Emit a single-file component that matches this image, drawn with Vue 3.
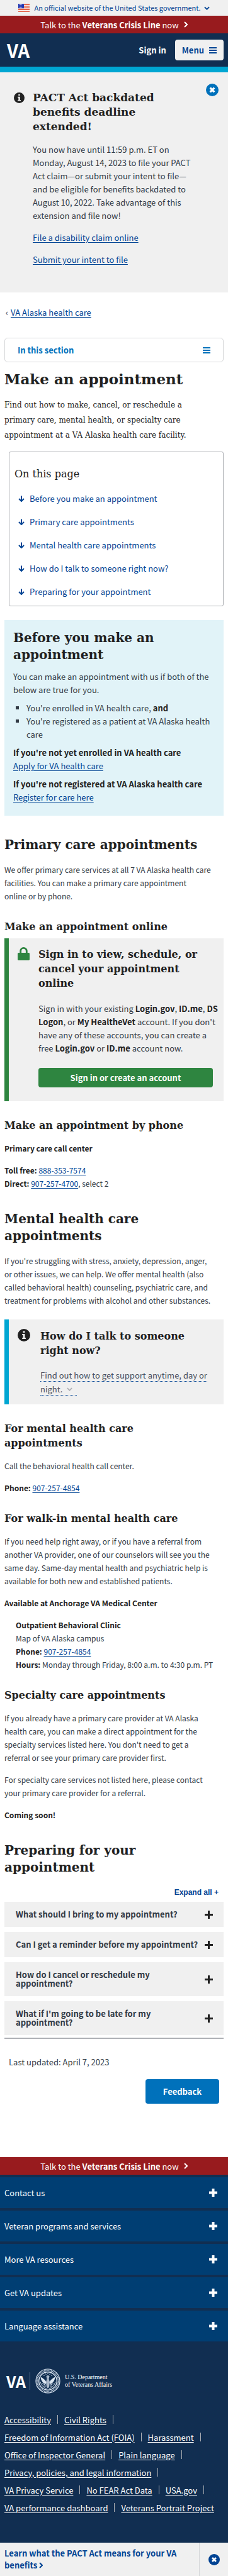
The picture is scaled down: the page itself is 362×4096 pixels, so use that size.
<script setup>
import { ref } from 'vue'

const sections = [
  'Before you make an appointment',
  'Primary care appointments',
  'Mental health care appointments',
  'How do I talk to someone right now?',
  'Preparing for your appointment',
]

const questions = [
  'What should I bring to my appointment?',
  'Can I get a reminder before my appointment?',
  'How do I cancel or reschedule my appointment?',
  "What if I'm going to be late for my appointment?",
]

const footerPanels = [
  'Contact us',
  'Veteran programs and services',
  'More VA resources',
  'Get VA updates',
  'Language assistance',
]

const footerRows = [
  ['Accessibility', 'Civil Rights'],
  ['Freedom of Information Act (FOIA)', 'Harassment'],
  ['Office of Inspector General', 'Plain language'],
  ['Privacy, policies, and legal information'],
  ['VA Privacy Service', 'No FEAR Act Data', 'USA.gov'],
  ['VA performance dashboard', 'Veterans Portrait Project'],
]

const open = ref(null)
</script>

<template>
  <div class="page">
    <header>
      <div class="gov">
        <svg class="flag" viewBox="0 0 18 13" aria-hidden="true">
          <rect width="18" height="13" fill="#fff" />
          <path d="M0 .9h18M0 3.7h18M0 6.5h18M0 9.3h18M0 12.1h18" stroke="#db3e1f" stroke-width="1.5" />
          <rect width="9" height="7.2" fill="#1e33b1" />
          <path d="M1 1.5h7M1 3.6h7M1 5.7h7" stroke="#fff" stroke-width=".8" stroke-dasharray="1 1" />
        </svg>
        <button type="button" class="gov-text">
          An official website of the United States government.
          <svg class="chev" viewBox="0 0 10 6" aria-hidden="true"><path d="M1 1l4 4 4-4" /></svg>
        </button>
      </div>
      <a class="crisis" href="#crisis">
        <span>Talk to the <strong>Veterans Crisis Line</strong> now</span>
        <svg viewBox="0 0 6 10" aria-hidden="true"><path d="M1 1l4 4-4 4" /></svg>
      </a>
      <div class="bar">
        <a href="#home" class="va">VA</a>
        <button type="button" class="signin">Sign in</button>
        <button type="button" class="menu">
          Menu
          <svg viewBox="0 0 12 10" aria-hidden="true"><path d="M0 1h12M0 5h12M0 9h12" /></svg>
        </button>
      </div>
    </header>

    <section class="promo">
      <svg class="info" viewBox="0 0 20 20" aria-hidden="true">
        <circle cx="10" cy="10" r="10" fill="#212121" />
        <path d="M8.5 3.4h3v2.6h-3zM7.2 8h4.3v6h1.4v2H7.2v-2h1.4v-4H7.2z" fill="#f0f0f0" />
      </svg>
      <div class="promo-body">
        <h2>PACT Act backdated benefits deadline extended!</h2>
        <p>You now have until 11:59 p.m. ET on Monday, August 14, 2023 to file your PACT Act claim—or submit your intent to file—and be eligible for benefits backdated to August 10, 2022. Take advantage of this extension and file now!</p>
        <p><a href="#claim">File a disability claim online</a></p>
        <p><a href="#intent">Submit your intent to file</a></p>
      </div>
      <button type="button" class="close" aria-label="Close announcement">
        <svg viewBox="0 0 20 20" aria-hidden="true">
          <circle cx="10" cy="10" r="10" fill="#0071bb" />
          <path d="M6.7 6.7l6.6 6.6M13.3 6.7l-6.6 6.6" stroke="#fff" stroke-width="3.2" />
        </svg>
      </button>
    </section>

    <main>
      <nav class="crumb" aria-label="Breadcrumb"><span>‹</span><a href="#alaska">VA Alaska health care</a></nav>
      <button type="button" class="in-section">
        In this section
        <svg viewBox="0 0 12 10" aria-hidden="true"><path d="M0 1h12M0 5h12M0 9h12" /></svg>
      </button>
      <h1>Make an appointment</h1>
      <p class="intro">Find out how to make, cancel, or reschedule a primary care, mental health, or specialty care appointment at a VA Alaska health care facility.</p>

      <nav class="toc" aria-labelledby="toc-title">
        <h2 id="toc-title">On this page</h2>
        <ul>
          <li v-for="s in sections" :key="s">
            <a href="#section">
              <svg viewBox="0 0 10 10" aria-hidden="true"><path d="M5 .5v8.2M1 5l4 4 4-4" /></svg>
              {{ s }}
            </a>
          </li>
        </ul>
      </nav>

      <section class="feature">
        <h2>Before you make an appointment</h2>
        <p>You can make an appointment with us if both of the below are true for you.</p>
        <ul>
          <li>You're enrolled in VA health care, <strong>and</strong></li>
          <li>You're registered as a patient at VA Alaska health care</li>
        </ul>
        <p><strong>If you're not yet enrolled in VA health care</strong><br><a href="#apply">Apply for VA health care</a></p>
        <p><strong>If you're not registered at VA Alaska health care</strong><br><a href="#register">Register for care here</a></p>
      </section>

      <h2>Primary care appointments</h2>
      <p>We offer primary care services at all 7 VA Alaska health care facilities. You can make a primary care appointment<br>online or by phone.</p>

      <h3>Make an appointment online</h3>
      <section class="alert green">
        <svg class="lock" viewBox="0 0 19 21" aria-hidden="true">
          <path d="M4.7 10V6.2a4.8 4.8 0 0 1 9.6 0V10" fill="none" stroke="#2e8540" stroke-width="2.8" />
          <rect y="9" width="19" height="12" rx="1.4" fill="#2e8540" />
        </svg>
        <div>
          <h3>Sign in to view, schedule, or cancel your appointment online</h3>
          <p>Sign in with your existing <strong>Login.gov</strong>, <strong>ID.me</strong>, <strong>DS Logon</strong>, or <strong>My HealtheVet</strong> account. If you don't have any of these accounts, you can create a free <strong>Login.gov</strong> or <strong>ID.me</strong> account now.</p>
          <button type="button">Sign in or create an account</button>
        </div>
      </section>

      <h3>Make an appointment by phone</h3>
      <p><strong>Primary care call center</strong></p>
      <p><strong>Toll free:</strong> <a href="#tel">888-353-7574</a><br><strong>Direct:</strong> <a href="#tel">907-257-4700</a>, select 2</p>

      <h2>Mental health care appointments</h2>
      <p>If you're struggling with stress, anxiety, depression, anger, or other issues, we can help. We offer mental health (also called behavioral health) counseling, psychiatric care, and treatment for problems with alcohol and other substances.</p>

      <section class="alert blue">
        <svg class="info" viewBox="0 0 20 20" aria-hidden="true">
          <circle cx="10" cy="10" r="10" fill="#212121" />
          <path d="M8.5 3.4h3v2.6h-3zM7.2 8h4.3v6h1.4v2H7.2v-2h1.4v-4H7.2z" fill="#f0f0f0" />
        </svg>
        <div>
          <h3>How do I talk to someone right now?</h3>
          <details>
            <summary>
              <span>Find out how to get support anytime, day or night. <svg viewBox="0 0 10 6" aria-hidden="true"><path d="M1 1l4 4 4-4" /></svg></span>
            </summary>
          </details>
        </div>
      </section>

      <h3 class="narrow">For mental health care appointments</h3>
      <p>Call the behavioral health call center.</p>
      <p><strong>Phone:</strong> <a href="#tel">907-257-4854</a></p>

      <h3>For walk-in mental health care</h3>
      <p>If you need help right away, or if you have a referral from another VA provider, one of our counselors will see you the same day. Same-day mental health and psychiatric help is available for both new and established patients.</p>
      <p><strong>Available at Anchorage VA Medical Center</strong></p>
      <p class="clinic"><strong>Outpatient Behavioral Clinic</strong><br>Map of VA Alaska campus<br><strong>Phone:</strong> <a href="#tel">907-257-4854</a><br><strong>Hours:</strong> Monday through Friday, 8:00 a.m. to 4:30 p.m. PT</p>

      <h3>Specialty care appointments</h3>
      <p>If you already have a primary care provider at VA Alaska health care, you can make a direct appointment for the specialty services listed here. You don't need to get a referral or see your primary care provider first.</p>
      <p>For specialty care services not listed here, please contact your primary care provider for a referral.</p>
      <p><strong>Coming soon!</strong></p>

      <h2 class="narrow">Preparing for your appointment</h2>
      <button type="button" class="expand">Expand all +</button>
      <div class="accordion">
        <button v-for="(q, i) in questions" :key="q" type="button" :aria-expanded="open === i" @click="open = open === i ? null : i">
          <span>{{ q }}</span>
          <svg viewBox="0 0 13 13" aria-hidden="true"><path d="M0 6.5h13M6.5 0v13" /></svg>
        </button>
      </div>
      <p class="updated">Last updated: April 7, 2023</p>
      <button type="button" class="feedback">Feedback</button>
    </main>

    <footer>
      <a class="crisis" href="#crisis">
        <span>Talk to the <strong>Veterans Crisis Line</strong> now</span>
        <svg viewBox="0 0 6 10" aria-hidden="true"><path d="M1 1l4 4-4 4" /></svg>
      </a>
      <div class="panels">
        <button v-for="p in footerPanels" :key="p" type="button">
          {{ p }}
          <svg viewBox="0 0 13 13" aria-hidden="true"><path d="M0 6.5h13M6.5 0v13" /></svg>
        </button>
      </div>
      <div class="legal">
        <div class="brand">
          <span class="va small">VA</span>
          <svg class="seal" viewBox="0 0 40 40" aria-hidden="true">
            <g fill="none" stroke="#dce6f2">
              <circle cx="20" cy="20" r="19" stroke-width="1.2" />
              <circle cx="20" cy="20" r="16.8" stroke-width="2.2" stroke-dasharray="1.3 .9" opacity=".8" />
              <circle cx="20" cy="20" r="14.3" stroke-width="1.4" />
            </g>
            <g fill="#dce6f2">
              <path d="M8.5 13.5c3 1.5 6.5 3.5 9 8l-1 3.5c-5-2-7.5-6-8-11.5z" />
              <path d="M31.5 13.5c-3 1.5-6.5 3.5-9 8l1 3.5c5-2 7.5-6 8-11.5z" />
              <path d="M17.5 12.5c1-2 4-2 5 0l-1 4 1.5 5-1 8-2 2.5-2-2.5-1-8 1.5-5z" opacity=".75" />
            </g>
            <g fill="none" stroke="#dce6f2" stroke-width=".9">
              <path d="M8 21c1.5 6 5 9.5 10 11M32 21c-1.5 6-5 9.5-10 11M11 24l5 2M29 24l-5 2M13 28l4 0M27 28l-4 0" />
              <path d="M13 10l1.5 2M27 10l-1.5 2M16.5 8l.7 2M23.5 8l-.7 2M20 7v2" />
            </g>
          </svg>
          <span class="dept">U.S. Department<br>of Veterans Affairs</span>
        </div>
        <nav aria-label="Legal">
          <ul v-for="(row, r) in footerRows" :key="r">
            <li v-for="l in row" :key="l" :class="{ last: r === 5 && l === row[1] }"><a href="#legal">{{ l }}</a></li>
          </ul>
        </nav>
      </div>
    </footer>

    <aside class="sticky">
      <a href="#pact">Learn what the PACT Act means for your VA benefits <svg viewBox="0 0 6 10" aria-hidden="true"><path d="M1 1l4 4-4 4" /></svg></a>
      <button type="button" aria-label="Dismiss">
        <svg viewBox="0 0 20 20" aria-hidden="true">
          <circle cx="10" cy="10" r="10" fill="#004393" />
          <path d="M6.7 6.7l6.6 6.6M13.3 6.7l-6.6 6.6" stroke="#fff" stroke-width="3.2" />
        </svg>
      </button>
    </aside>
  </div>
</template>

<style>
body {
  background: #fff;
}
</style>

<style scoped>
.page {
  font-family: "Noto Sans CJK SC", "Noto Sans", sans-serif;
  font-size: 13px;
  line-height: 21px;
  color: #323a45;
}
* {
  box-sizing: border-box;
}
h1, h2, h3, p, ul {
  margin: 0;
  padding: 0;
}
ul {
  list-style: none;
}
h1, h2, h3, .intro {
  font-family: "DejaVu Serif", serif;
  color: #212121;
}
strong {
  color: #212121;
}
svg {
  display: block;
  flex: none;
}
a {
  color: #004393;
  text-underline-offset: 2px;
}
button {
  font: inherit;
  border: 0;
  padding: 0;
  background: none;
  color: inherit;
  cursor: pointer;
}
.gov {
  display: flex;
  align-items: center;
  justify-content: center;
  gap: 7px;
  height: 25px;
  background: #f0f0f0;
}
.flag {
  width: 18px;
  height: 13px;
}
.gov-text {
  display: flex;
  align-items: center;
  gap: 5px;
  font-size: 11px;
  color: #004393;
  white-space: nowrap;
}
.chev {
  width: 9px;
  height: 6px;
}
.chev path {
  fill: none;
  stroke: #004393;
  stroke-width: 2;
}
.crisis {
  display: flex;
  align-items: center;
  justify-content: center;
  gap: 8px;
  height: 28px;
  background: #981b1e;
  color: #fff;
  text-decoration: none;
}
.crisis strong {
  color: #fff;
}
.crisis svg {
  width: 6px;
  height: 10px;
}
.crisis path {
  fill: none;
  stroke: #fff;
  stroke-width: 2;
}
.bar {
  display: flex;
  align-items: center;
  height: 62px;
  padding: 0 7px 0 11px;
  background: #112e51;
  border-bottom: 9px solid #00a6d2;
  color: #fff;
  font-weight: 700;
}
.va {
  margin-right: auto;
  color: #fff;
  font-size: 29px;
  font-weight: 700;
  text-decoration: none;
}
.signin {
  margin-right: 14px;
}
.menu {
  display: flex;
  align-items: center;
  gap: 8px;
  height: 33px;
  padding: 0 11px;
  border-radius: 4px;
  background: #f0f0f0;
  color: #004393;
}
.menu svg {
  width: 12px;
  height: 10px;
}
.menu path {
  stroke: #004393;
  stroke-width: 2;
}
.promo {
  display: flex;
  align-items: flex-start;
  padding: 29px 15px 42px 22px;
  background: #f0f0f0;
}
.promo .info {
  width: 17px;
  height: 17px;
  margin: 3px 13px 0 0;
}
.promo-body {
  flex: 1;
}
.promo p {
  margin-top: 14px;
}
.close {
  width: 20px;
  margin: -11px 0 0 18px;
}
main {
  padding: 21px 7px 85px;
}
.crumb {
  display: flex;
  gap: 4px;
  padding-left: 2px;
}
.in-section {
  display: flex;
  align-items: center;
  justify-content: space-between;
  width: 100%;
  height: 39px;
  margin-top: 30px;
  padding: 0 20px;
  border: 1px solid #d6d7d9;
  border-radius: 5px;
  color: #0071bb;
  font-weight: 700;
}
.in-section svg {
  width: 12px;
  height: 10px;
}
.in-section path {
  stroke: #0071bb;
  stroke-width: 2;
}
h1 {
  margin-top: 12px;
  font-size: 23px;
  line-height: 30px;
}
main > p {
  margin-top: 14px;
  padding-right: 15px;
  font-size: 12px;
}
main > .intro {
  padding-right: 20px;
  line-height: 24px;
}
.toc {
  margin: 14px 0 0 7px;
  padding: 23px 8px 12px;
  border: 1px solid #aeb0b5;
  border-radius: 3px;
}
.toc ul {
  display: grid;
  gap: 16px;
  margin-top: 16px;
  padding-left: 6px;
}
.toc a {
  display: flex;
  align-items: center;
  gap: 8px;
  text-decoration: none;
}
.toc svg {
  width: 10px;
  height: 10px;
}
.toc path {
  fill: none;
  stroke: #004393;
  stroke-width: 2;
}
h2 {
  margin-top: 33px;
  font-size: 20px;
  line-height: 27px;
}
h2 + p {
  margin-top: 15px;
}
h3 {
  margin-top: 27px;
  font-size: 16px;
  line-height: 23px;
}
.narrow {
  padding-right: 40px;
}
.promo h2 {
  width: 220px;
  margin: 0;
  font-size: 17px;
  line-height: 23px;
}
.toc h2 {
  margin: 0;
  font-size: 16px;
  font-weight: 400;
  line-height: 24px;
}
.feature {
  margin-top: 22px;
  padding: 15px 14px 19px;
  background: #e1f3f8;
}
.feature h2 {
  margin: 0;
}
.feature p {
  margin-top: 8px;
}
.feature h2 + p {
  margin-top: 10px;
}
.feature ul {
  margin-top: 8px;
  padding-left: 21px;
  list-style: square;
}
.alert {
  display: flex;
  align-items: flex-start;
  margin-top: 7px;
  padding: 14px 6px 22px 14px;
  border-left: 7px solid #2e8540;
  background: #f0f0f0;
}
.alert h3 {
  margin: 0;
  padding-right: 14px;
}
.lock {
  width: 19px;
  height: 21px;
  margin-right: 14px;
}
.alert p {
  margin-top: 18px;
}
.green button {
  display: block;
  width: calc(100% - 11px);
  height: 31px;
  margin-top: 21px;
  border-radius: 4px;
  background: #2e8540;
  color: #fff;
  font-weight: 700;
}
.blue {
  margin-top: 20px;
  padding: 15px 17px 13px 14px;
  border-color: #00a6d2;
}
.blue .info {
  width: 20px;
  height: 20px;
  margin-right: 16px;
}
summary {
  margin-top: 17px;
  line-height: 22px;
  list-style: none;
  color: #4a5160;
  cursor: pointer;
}
summary span {
  border-bottom: 1px dotted #004393;
}
summary svg {
  display: inline-block;
  width: 9px;
  height: 6px;
  margin: 0 7px 2px 4px;
}
summary path {
  fill: none;
  stroke: #aeb0b5;
  stroke-width: 2;
}
main > .clinic {
  padding: 0 0 0 18px;
}
.expand {
  display: block;
  margin: 19px 8px 0 auto;
  color: #004393;
  font: 700 12px/14px "Liberation Sans", sans-serif;
}
.accordion {
  display: grid;
  gap: 8px;
  margin-top: 8px;
  padding-bottom: 4px;
  border-bottom: 2px solid #aeb0b5;
}
.accordion button {
  display: flex;
  align-items: center;
  justify-content: space-between;
  gap: 10px;
  padding: 13px 17px 13px 18px;
  background: #f0f0f0;
  color: #323a45;
  font-weight: 700;
  line-height: 14px;
  text-align: left;
}
.accordion svg,
.panels svg {
  width: 13px;
  height: 13px;
}
.accordion path {
  stroke: #212121;
  stroke-width: 3;
}
main > .updated {
  margin-top: 26px;
  padding-left: 7px;
  font-size: 13px;
}
.feedback {
  display: block;
  width: 117px;
  height: 39px;
  margin: 17px 7px 0 auto;
  border-radius: 4px;
  background: #0071bb;
  color: #fff;
  font-weight: 700;
}
.panels button {
  display: flex;
  align-items: center;
  justify-content: space-between;
  width: 100%;
  height: 53px;
  padding: 0 17px 0 7px;
  border-top: 4px solid #112e51;
  background: #003e73;
  color: #fff;
}
.panels path {
  stroke: #fff;
  stroke-width: 4;
}
.legal {
  padding: 43px 7px 42px;
  background: #112e51;
  color: #fff;
}
.brand {
  display: flex;
  align-items: center;
  height: 40px;
  padding-left: 3px;
}
.small {
  margin: 0;
  padding-right: 6px;
  border-right: 1px solid #5b7390;
  font-size: 25px;
  line-height: 28px;
}
.seal {
  width: 40px;
  height: 40px;
  margin: 0 7px 0 8px;
}
.dept {
  font: 10px/12px "Liberation Serif", serif;
}
.legal nav {
  margin-top: 27px;
}
.legal ul {
  display: flex;
  height: 28px;
  align-items: center;
}
.legal li {
  display: flex;
  align-items: center;
  white-space: nowrap;
}
.legal li::after {
  content: "";
  width: 1px;
  height: 14px;
  margin: 0 10px;
  background: #aeb0b5;
}
.legal .last::after {
  display: none;
}
.legal a {
  color: #fff;
}
.sticky {
  display: flex;
  height: 53px;
  background: #f0f0f0;
}
.sticky a {
  flex: 1;
  padding: 7px 10px 0 7px;
  color: #004393;
  font-weight: 700;
  line-height: 19px;
  text-decoration: none;
}
.sticky a svg {
  display: inline-block;
  width: 6px;
  height: 10px;
}
.sticky path {
  fill: none;
  stroke: #004393;
  stroke-width: 2;
}
.sticky button {
  display: flex;
  align-items: center;
  justify-content: center;
  width: 46px;
  border-left: 1px solid #d6d7d9;
}
.sticky button svg {
  width: 18px;
  height: 18px;
}
.sticky button path {
  stroke: #fff;
  stroke-width: 3;
}
</style>
